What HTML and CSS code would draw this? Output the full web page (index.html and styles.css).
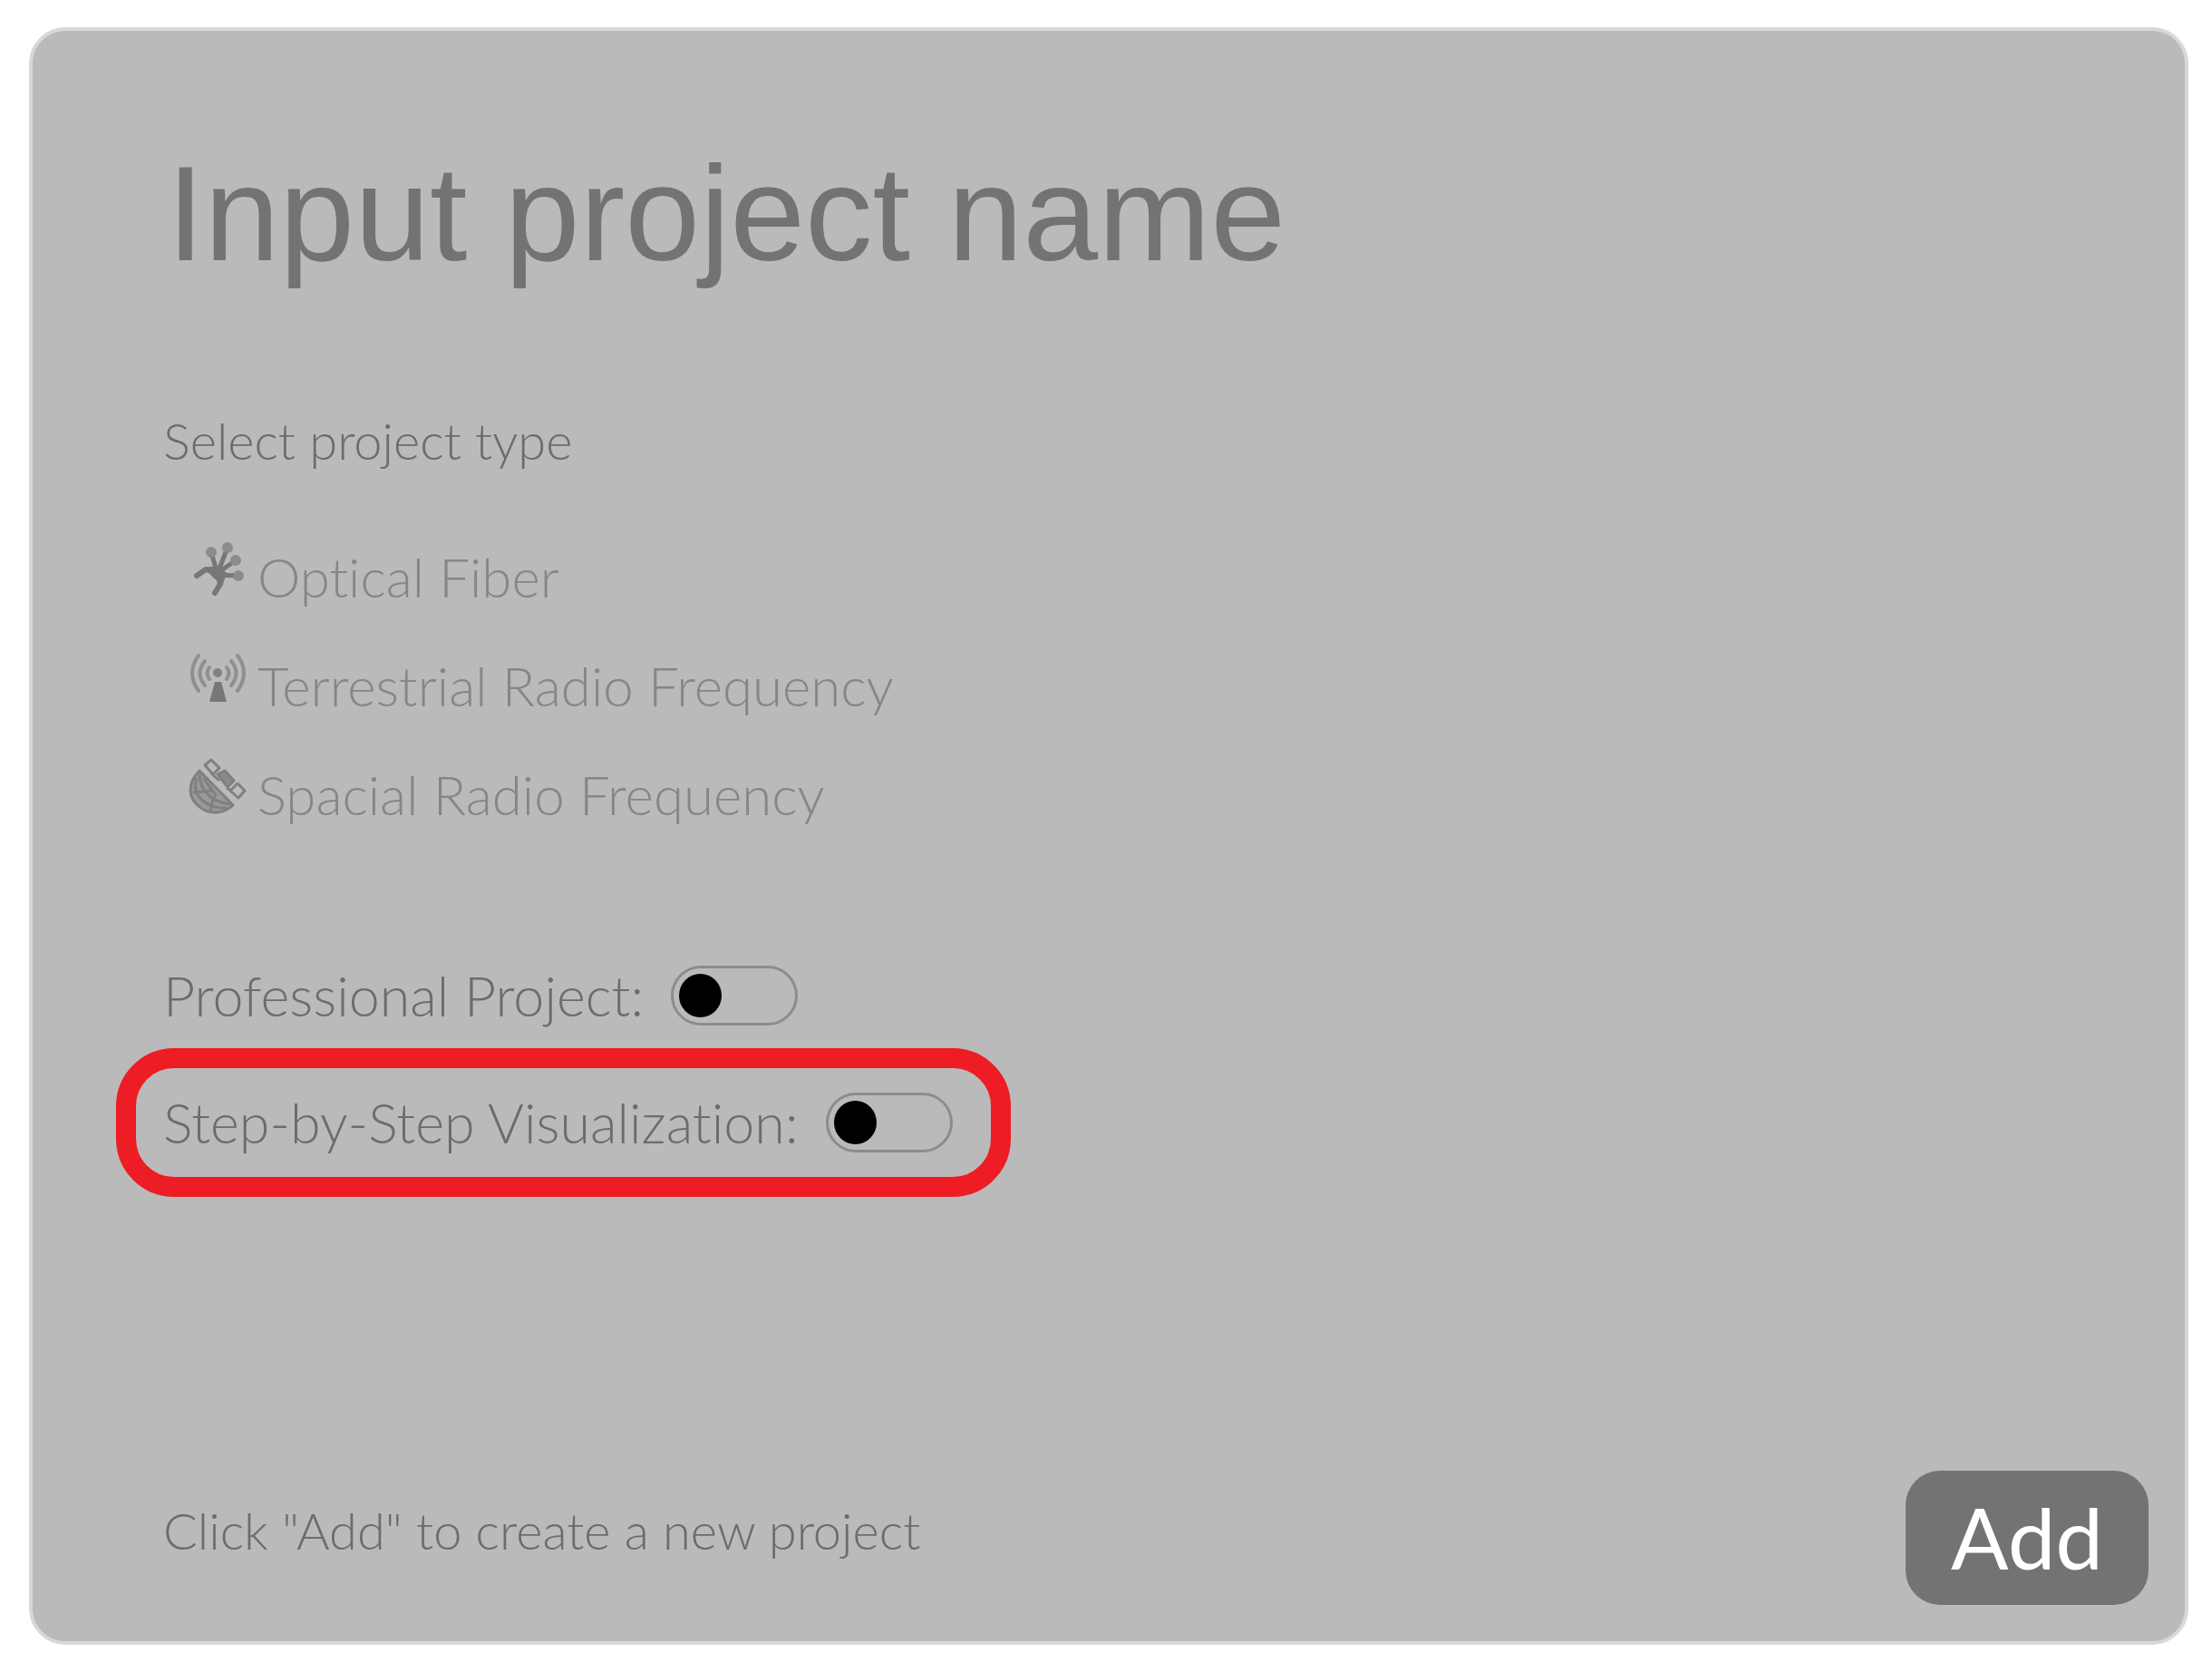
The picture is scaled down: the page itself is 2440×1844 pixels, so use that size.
FILE: index.html
```html
<!DOCTYPE html>
<html lang="en">
<head>
    <meta charset="UTF-8">
    <meta name="viewport" content="width=device-width, initial-scale=1.0">
    <title>New project</title>
    <link rel="stylesheet" href="styles.css">
</head>
<body>
    <form class="panel">
        <input class="project-name" type="text" name="name" placeholder="Input project name" aria-label="Project name">

        <h2 class="section-title">Select project type</h2>
        <div class="types">
            <button class="type" type="button">
                <svg class="type-icon" viewBox="0 0 64 64" fill="none" stroke="#777" stroke-width="5" stroke-linecap="round">
                    <path d="M32 36 25 14M32 36 43 8M32 36 52 22M32 38 55 39"/>
                    <path d="M9 39 19 32 32 36 35 48 29 58" stroke-width="6" stroke-linejoin="round"/>
                    <path d="M17 30 32 28 42 36 38 48 28 42Z" fill="#777" stroke="none"/>
                    <g fill="#8c8c8c" stroke="none">
                        <circle cx="25" cy="13" r="6"/>
                        <circle cx="43" cy="8" r="6"/>
                        <circle cx="52" cy="22" r="6"/>
                        <circle cx="55" cy="39" r="6"/>
                    </g>
                </svg>
                <span class="type-name">Optical Fiber</span>
            </button>
            <button class="type" type="button">
                <svg class="type-icon" viewBox="0 0 64 64" fill="none" stroke="#8f8f8f" stroke-width="4" stroke-linecap="round">
                    <path d="M11 7Q-3 26 11 46M18 13Q7 26 18 40M23 20Q18 26 23 33"/>
                    <path d="M54 7Q68 26 54 46M47 13Q58 26 47 40M42 20Q47 26 42 33"/>
                    <circle cx="32" cy="26" r="5" fill="#808080" stroke="none"/>
                    <path d="M29 36H36L42 58H23Z" fill="#777" stroke="none"/>
                </svg>
                <span class="type-name">Terrestrial Radio Frequency</span>
            </button>
            <button class="type" type="button">
                <svg class="type-icon" viewBox="0 0 64 64" fill="none" stroke="#808080" stroke-width="3" stroke-linejoin="round">
                    <path d="M12 14C-2 28 0 44 11 53C22 63 38 62 49 52Z" fill="#999"/>
                    <path d="M9 22C5 34 10 43 18 49C26 54 34 56 42 55M12 17C12 28 16 36 23 42C29 47 38 50 46 51M16 22 31 42M5 38 26 36M24 58 28 42"/>
                    <path d="M18 8 25 2 34 11 27 18ZM54 28 62 36 55 44 46 36Z"/>
                    <path d="M32 18 40 14 50 25 43 32Z" fill="#8a8a8a"/>
                    <path d="M25 17 34 25M42 33 47 36"/>
                </svg>
                <span class="type-name">Spacial Radio Frequency</span>
            </button>
        </div>

        <div class="option">
            <label for="professional">Professional Project:</label>
            <input class="switch" type="checkbox" id="professional" name="professional">
        </div>
        <div class="option option-highlight">
            <label for="steps">Step-by-Step Visualization:</label>
            <input class="switch" type="checkbox" id="steps" name="steps">
        </div>

        <div class="footer">
            <p class="hint">Click "Add" to create a new project</p>
            <button class="add" type="button">Add</button>
        </div>
    </form>
</body>
</html>
```
FILE: styles.css
```css
* { box-sizing: border-box; }
body { margin: 0; padding: 30px 26px 30px 32px; min-height: 100vh; display: flex; background: #fff; color: #6c6c6c; font-family: Lato, "Liberation Sans", sans-serif; font-size: 60px; font-weight: 300; line-height: 72px; font-variant-ligatures: none; }
.panel { flex: 1; display: flex; flex-direction: column; align-items: flex-start; padding: 112px 40px 40px 144px; background: #bababa; border: 4px solid #d8d8d8; border-radius: 40px; }
.project-name { width: 100%; height: 180px; padding: 0 4px; border: none; outline: none; background: none; color: #737373; font-family: "Liberation Sans", Arial, sans-serif; font-size: 149px; }
.project-name::placeholder { color: #737373; opacity: 1; }
.section-title { margin: 124px 0 0; font-size: 56px; font-weight: 300; }

.types { display: flex; flex-direction: column; align-items: flex-start; gap: 44px; margin: 74px 0 0 28px; }
.type { display: flex; align-items: flex-start; gap: 12px; padding: 0; border: none; background: none; color: #868686; font: inherit; font-variant-ligatures: none; cursor: pointer; }
.type-icon { width: 64px; height: 64px; }
.type-name { padding-top: 4px; }

.option { display: flex; align-items: center; gap: 30px; margin-top: 150px; font-size: 61px; }
.option-highlight { margin: 22px 0 0 -52px; padding: 24px 42px 24px 30px; border: 22px solid #ee1c24; border-radius: 64px; }
.switch { appearance: none; width: 140px; height: 66px; margin: 0; padding: 6px; border: 3px solid #8c8c8c; border-radius: 33px; cursor: pointer; }
.switch::before { content: ""; display: block; width: 47px; height: 48px; border-radius: 50%; background: #000; }
.switch:checked::before { margin-left: auto; }

.footer { display: flex; justify-content: space-between; align-items: center; width: 100%; margin-top: auto; }
.hint { margin: 0; padding-bottom: 16px; font-size: 56px; }
.add { width: 268px; height: 148px; padding: 0 0 4px; border: none; border-radius: 38px; background: #737373; color: #fff; font-family: inherit; font-size: 94px; cursor: pointer; }
```
